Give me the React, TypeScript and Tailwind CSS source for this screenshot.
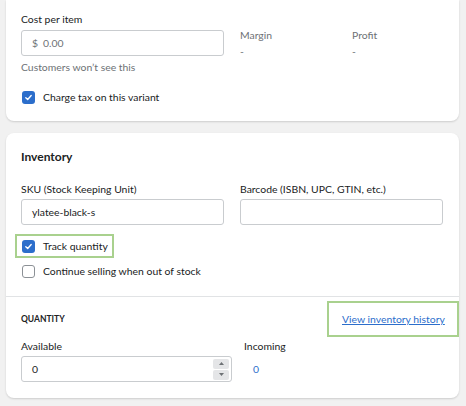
import React from "react";

const font = { fontFamily: "Lato, 'Open Sans', sans-serif" };

function Check({ checked }: { checked: boolean }) {
  if (checked) {
    return (
      <span className="flex h-[13px] w-[13px] items-center justify-center rounded-[3px] bg-[#2c6ecb]">
        <svg width="9" height="9" viewBox="0 0 10 10" fill="none">
          <path d="M2 5.2 L4.1 7.2 L8 2.8" stroke="white" strokeWidth="1.5" strokeLinecap="round" strokeLinejoin="round" />
        </svg>
      </span>
    );
  }
  return <span className="block h-[13px] w-[13px] rounded-[3px] border border-[#8c9196] bg-white" />;
}

export default function App() {
  return (
    <div className="min-h-[406px] w-[466px] bg-[#f1f1f1] pl-[6px] pr-[7px] text-[10.4px] leading-[16px] text-[#202223]" style={font}>
      {/* Card 1 */}
      <div className="rounded-b-[8px] bg-white pb-[16px] pl-[15px] pr-[16px] pt-[11px] shadow-[0_1px_2px_rgba(0,0,0,0.15)]">
        <div className="flex">
          <div className="w-[203px]">
            <div>Cost per item</div>
            <div className="mt-[3px] flex h-[26px] items-center rounded-[3px] border border-[#c9cccf] pl-[10px] text-[#6d7175]">
              <span>$</span>
              <span className="ml-[5px]">0.00</span>
            </div>
            <div className="mt-[3px] text-[#6d7175]">Customers won’t see this</div>
          </div>
          <div className="ml-[16px] w-[112px] pt-[16px] text-[#6d7175]">
            <div>Margin</div>
            <div>-</div>
          </div>
          <div className="pt-[16px] text-[#6d7175]">
            <div>Profit</div>
            <div>-</div>
          </div>
        </div>
        <div className="mt-[14px] flex items-center gap-[8px] pl-[1px]">
          <Check checked />
          <span>Charge tax on this variant</span>
        </div>
      </div>

      {/* Card 2 */}
      <div className="mt-[12px] rounded-[8px] bg-white shadow-[0_1px_2px_rgba(0,0,0,0.15)]">
        <div className="pb-[17px] pl-[15px] pr-[16px] pt-[16px]">
          <div className="text-[12px] font-bold">Inventory</div>
          <div className="mt-[16px] grid grid-cols-2 gap-x-[16px]">
            <div>
              <div>SKU (Stock Keeping Unit)</div>
              <div className="mt-[2px] flex h-[26px] items-center rounded-[3px] border border-[#c9cccf] pl-[10px]">
                ylatee-black-s
              </div>
            </div>
            <div>
              <div>Barcode (ISBN, UPC, GTIN, etc.)</div>
              <div className="mt-[2px] h-[26px] rounded-[3px] border border-[#c9cccf]" />
            </div>
          </div>
          <div className="-ml-[6px] mt-[9px] flex w-[99px] items-center gap-[8px] border-2 border-[#a9d18e] py-[2px] pl-[5px]">
            <Check checked />
            <span>Track quantity</span>
          </div>
          <div className="mt-[5px] flex items-center gap-[8px] pl-[1px]">
            <Check checked={false} />
            <span>Continue selling when out of stock</span>
          </div>
        </div>
        <div className="border-t border-[#e1e3e5] pb-[16px] pl-[15px] pt-[4px]">
          <div className="flex h-[36px] items-center justify-between">
            <div className="text-[8.5px] font-bold uppercase">Quantity</div>
            <div className="flex h-[36px] w-[132px] items-center border-2 border-[#a9d18e] pl-[13px]">
              <a className="text-[#2c6ecb] underline" href="#">View inventory history</a>
            </div>
          </div>
          <div className="mt-[1px] flex">
            <div className="w-[211px]">
              <div>Available</div>
              <div className="mt-[2px] flex h-[26px] items-center justify-between rounded-[3px] border border-[#c9cccf] pl-[10px] pr-[2px]">
                <span>0</span>
                <div className="flex flex-col gap-[1px]">
                  <div className="flex h-[10px] w-[16px] items-center justify-center rounded-[2px] bg-[#e4e5e7]">
                    <svg width="5" height="3" viewBox="0 0 5 3"><path d="M0 3 L2.5 0 L5 3 Z" fill="#6d7175" /></svg>
                  </div>
                  <div className="flex h-[10px] w-[16px] items-center justify-center rounded-[2px] bg-[#e4e5e7]">
                    <svg width="5" height="3" viewBox="0 0 5 3"><path d="M0 0 L2.5 3 L5 0 Z" fill="#6d7175" /></svg>
                  </div>
                </div>
              </div>
            </div>
            <div className="ml-[12px]">
              <div>Incoming</div>
              <div className="mt-[2px] flex h-[26px] items-center pl-[9px] text-[#2c6ecb]">0</div>
            </div>
          </div>
        </div>
      </div>
    </div>
  );
}
